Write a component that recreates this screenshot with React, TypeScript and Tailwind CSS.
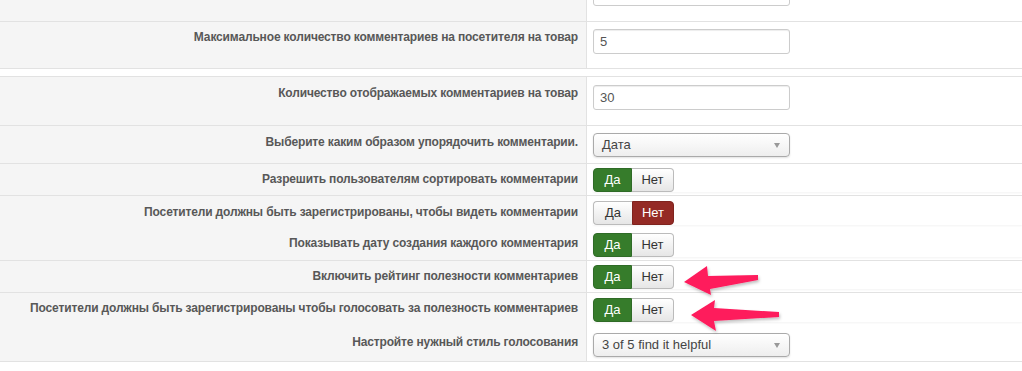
import React from 'react'

type Row = {
  label: string
  h: string
  lt: string
  ct: string
  border?: boolean
  control: React.ReactNode
}

function TextInput({ value }: { value: string }) {
  return (
    <div className="flex h-[25px] w-[197px] items-center rounded-[3px] border border-[#cccccc] bg-white pl-[6px] text-[13px] text-[#555555] shadow-[inset_0_1px_1px_rgba(0,0,0,0.075)]">
      {value}
    </div>
  )
}

function Select({ value }: { value: string }) {
  return (
    <div className="flex h-[24px] w-[197px] items-center justify-between rounded-[4px] border border-[#aaaaaa] bg-gradient-to-b from-white to-[#eeeeee] pl-[8px] pr-[9px] text-[13px] text-[#444444] shadow-[0_1px_2px_rgba(0,0,0,0.12)]">
      <span>{value}</span>
      <span className="h-0 w-0 border-x-[3px] border-t-[5px] border-x-transparent border-t-[#999999]" />
    </div>
  )
}

function Toggle({ yes }: { yes: boolean }) {
  const off = 'bg-gradient-to-b from-white to-[#e6e6e6] text-[#333333] border border-[#bbbbbb]'
  return (
    <div className="flex h-[24px] text-[13px] shadow-[0_1px_2px_rgba(0,0,0,0.05)]">
      <div
        className={
          yes
            ? 'flex w-[39px] items-center justify-center rounded-l-[4px] border border-[#2f6b27] bg-[#367c2b] text-white'
            : 'flex w-[39px] items-center justify-center rounded-l-[4px] border-r-0 ' + off
        }
      >
        Да
      </div>
      <div
        className={
          yes
            ? 'flex w-[42px] items-center justify-center rounded-r-[4px] border-l-0 ' + off
            : 'flex w-[42px] items-center justify-center rounded-r-[4px] border border-[#7f231e] bg-[#942a25] text-white'
        }
      >
        Нет
      </div>
    </div>
  )
}

const rows: Row[] = [
  { label: 'Максимальное количество комментариев на посетителя на товар', h: 'h-[47px]', lt: 'pt-[6px]', ct: 'pt-[7px]', border: true, control: <TextInput value="5" /> },
]

const rows2: Row[] = [
  { label: 'Количество отображаемых комментариев на товар', h: 'h-[49px]', lt: 'pt-[7px]', ct: 'pt-[8px]', border: true, control: <TextInput value="30" /> },
  { label: 'Выберите каким образом упорядочить комментарии.', h: 'h-[38px]', lt: 'pt-[7px]', ct: 'pt-[7px]', border: true, control: <Select value="Дата" /> },
  { label: 'Разрешить пользователям сортировать комментарии', h: 'h-[32px]', lt: 'pt-[6px]', ct: 'pt-[4px]', border: true, control: <Toggle yes /> },
  { label: 'Посетители должны быть зарегистрированы, чтобы видеть комментарии', h: 'h-[32px]', lt: 'pt-[7px]', ct: 'pt-[5px]', control: <Toggle yes={false} /> },
  { label: 'Показывать дату создания каждого комментария', h: 'h-[33px]', lt: 'pt-[6px]', ct: 'pt-[5px]', border: true, control: <Toggle yes /> },
  { label: 'Включить рейтинг полезности комментариев', h: 'h-[32px]', lt: 'pt-[6px]', ct: 'pt-[4px]', border: true, control: <Toggle yes /> },
  { label: 'Посетители должны быть зарегистрированы чтобы голосовать за полезность комментариев', h: 'h-[34px]', lt: 'pt-[6px]', ct: 'pt-[5px]', control: <Toggle yes /> },
  { label: 'Настройте нужный стиль голосования', h: 'h-[35px]', lt: 'pt-[6px]', ct: 'pt-[6px]', border: true, control: <Select value="3 of 5 find it helpful" /> },
]

function FormRow({ row }: { row: Row }) {
  return (
    <div className={`flex ${row.h} ${row.border ? 'border-b border-[#e2e2e2]' : ''}`}>
      <div className={`w-[587px] shrink-0 border-r border-[#e2e2e2] bg-[#f5f5f5] pr-[8px] text-right text-[12px] font-bold leading-[18px] tracking-[-0.15px] text-[#585858] ${row.lt}`}>
        {row.label}
      </div>
      <div className={`flex-1 pl-[6px] ${row.ct}`}>{row.control}</div>
    </div>
  )
}

function Arrow({ d }: { d: string }) {
  return <path d={d} fill="#fe1a5c" />
}

export default function App() {
  return (
    <div className="relative h-[371px] w-[1022px] overflow-hidden bg-white" style={{ fontFamily: '"Liberation Sans", Arial, sans-serif' }}>
      {/* top partial row */}
      <div className="flex h-[22px] border-b border-[#e2e2e2]">
        <div className="w-[587px] shrink-0 border-r border-[#e2e2e2] bg-[#f5f5f5]" />
        <div className="flex-1 pl-[6px]">
          <div className="-mt-[20px] h-[26px] w-[197px] rounded-[3px] border border-[#cccccc] bg-white" />
        </div>
      </div>
      {rows.map((r) => (
        <FormRow key={r.label} row={r} />
      ))}
      <div className="h-[8px] border-b border-[#e2e2e2] bg-white" />
      {rows2.map((r) => (
        <FormRow key={r.label} row={r} />
      ))}

      {/* annotation arrows */}
      <svg className="pointer-events-none absolute left-0 top-0" width="1022" height="371">
        <defs>
          <filter id="sh" x="-20%" y="-40%" width="140%" height="180%">
            <feDropShadow dx="1" dy="2" stdDeviation="1.5" floodColor="#000" floodOpacity="0.25" />
          </filter>
        </defs>
        <g filter="url(#sh)">
          <Arrow d="M684 282 L707 266 L708 276 L758 275 L758 280 L710 289 L711 295 Z" />
          <Arrow d="M691 315 L715 300 L714 308 L779 312 L779 317 L714 321 L716 331 Z" />
        </g>
      </svg>
    </div>
  )
}
